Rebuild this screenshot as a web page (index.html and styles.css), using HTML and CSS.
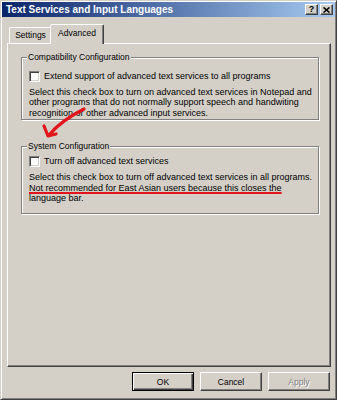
FILE: index.html
```html
<!DOCTYPE html>
<html lang="en">
<head>
    <meta charset="UTF-8">
    <title>Text Services and Input Languages</title>
    <link rel="stylesheet" href="styles.css">
</head>
<body>
    <div class="window">
        <div class="titlebar">
            <span class="title">Text Services and Input Languages</span>
            <div class="caption-buttons">
                <span class="cap-btn help">?</span>
                <span class="cap-btn">
                    <svg width="7" height="6" viewBox="0 0 7 6">
                        <path d="M0.5,0.5 L6.5,5.5 M6.5,0.5 L0.5,5.5" stroke="#000" stroke-width="1.6"/>
                    </svg>
                </span>
            </div>
        </div>

        <div class="client">
            <div class="tabs">
                <div class="tab">Settings</div>
                <div class="tab active">Advanced</div>
            </div>

            <div class="panel">
                <fieldset class="group">
                    <legend>Compatibility Configuration</legend>
                    <div class="check"><span class="box"></span>Extend support of advanced text services to all programs</div>
                    <p class="desc">Select this check box to turn on advanced text services in Notepad and<br>other programs that do not normally support speech and handwiting<br>recognition or other advanced input services.</p>
                </fieldset>

                <fieldset class="group system">
                    <legend>System Configuration</legend>
                    <div class="check"><span class="box"></span>Turn off advanced text services</div>
                    <p class="desc">Select this check box to turn off advanced text services in all programs.<br><span class="marked">Not recommended for East Asian users because this closes the</span><br>language bar.</p>
                </fieldset>
            </div>

            <div class="actions">
                <button type="button" class="btn default">OK</button>
                <button type="button" class="btn">Cancel</button>
                <button type="button" class="btn" disabled>Apply</button>
            </div>
        </div>

        <!-- red arrow drawn over the dialog -->
        <svg class="arrow" width="50" height="36" viewBox="0 0 50 36">
            <path d="M46,4 C38,8 22,17 11,30" fill="none" stroke="#e3141c" stroke-width="3.2" stroke-linecap="round"/>
            <path d="M6,21 L10,31 L18,29" fill="none" stroke="#e3141c" stroke-width="3.2" stroke-linecap="round" stroke-linejoin="round"/>
        </svg>
    </div>
</body>
</html>
```

FILE: styles.css
```css
body {
    margin: 0;
    background: #d4d0c8;
}

.window {
    position: relative;
    width: 337px;
    height: 400px;
    box-sizing: border-box;
    padding: 1px;
    border: 1px solid;
    border-color: #d4d0c8 #404040 #404040 #d4d0c8;
    box-shadow: inset 1px 1px #fff, inset -1px -1px #808080;
    background: #d4d0c8;
    font-family: "Liberation Sans", Arial, sans-serif;
    font-size: 8.5px;
    color: #000;
}

/* barra de titulo */
.titlebar {
    display: flex;
    align-items: center;
    justify-content: space-between;
    height: 15px;
    padding: 0 2px 0 2px;
    background: linear-gradient(to right, #0a246a, #a6caf0);
}

.title {
    color: #fff;
    font-weight: bold;
    font-size: 10px;
    padding-left: 2px;
}

.caption-buttons {
    display: flex;
    gap: 2px;
}

.cap-btn {
    display: flex;
    align-items: center;
    justify-content: center;
    width: 13px;
    height: 11px;
    box-sizing: border-box;
    border: 1px solid;
    border-color: #fff #404040 #404040 #fff;
    box-shadow: inset -1px -1px #808080;
    background: #d4d0c8;
}

.cap-btn.help {
    font-weight: bold;
    font-size: 9px;
    line-height: 9px;
}

.client {
    padding: 7px 4px 0 5px;
}

/* pestañas */
.tabs {
    display: flex;
    align-items: flex-end;
    height: 19px;
    padding-left: 2px;
}

.tab {
    width: 43px;
    height: 16px;
    box-sizing: border-box;
    border: 1px solid;
    border-bottom: none;
    border-color: #fff #404040 transparent #fff;
    border-radius: 2px 2px 0 0;
    box-shadow: inset -1px 0 #808080;
    text-align: center;
    line-height: 14px;
}

.tab.active {
    position: relative;
    z-index: 1;
    width: 54px;
    height: 20px;
    margin-left: -2px;
    margin-bottom: -1px;
    background: #d4d0c8;
    line-height: 16px;
}

.panel {
    height: 324px;
    box-sizing: border-box;
    padding: 0 11px 0 13px;
    border: 1px solid;
    border-color: #fff #404040 #404040 #fff;
    box-shadow: inset -1px -1px #808080;
}

/* cuadros de grupo */
.group {
    margin: 8px 0 0;
    padding: 8px 7px 1px 7px;
    min-width: 0;
    border: 1px solid #808080;
    box-shadow: inset 1px 1px #fff, 1px 1px #fff;
}

.group legend {
    margin-left: -2px;
    padding: 0 1px;
    line-height: 11px;
    background: #d4d0c8;
}

.group.system {
    margin-top: 21px;
    padding-top: 4px;
    padding-bottom: 10px;
}

.check {
    display: flex;
    align-items: center;
    height: 11px;
    line-height: 11px;
    font-size: 9px;
}

.box {
    width: 11px;
    height: 11px;
    box-sizing: border-box;
    margin-right: 4px;
    border: 1px solid;
    border-color: #808080 #fff #fff #808080;
    box-shadow: inset 1px 1px #404040, inset -1px -1px #d4d0c8;
    background: #fff;
}

.desc {
    margin: 5px 0 0;
    font-size: 9px;
    line-height: 10.4px;
    white-space: nowrap;
}

.marked {
    text-decoration: underline;
    text-decoration-color: #e3141c;
    text-decoration-thickness: 2px;
    text-underline-offset: 1px;
}

/* botones */
.actions {
    display: flex;
    justify-content: flex-end;
    gap: 6px;
    margin-top: 5px;
    padding-right: 1px;
}

.btn {
    width: 62px;
    height: 19px;
    box-sizing: border-box;
    padding: 0;
    border: 1px solid;
    border-color: #fff #404040 #404040 #fff;
    box-shadow: inset -1px -1px #808080;
    background: #d4d0c8;
    font-family: inherit;
    font-size: 8.5px;
    color: #000;
}

.btn.default {
    border-color: #000;
    box-shadow: inset 1px 1px #fff, inset -1px -1px #404040, inset -2px -2px #808080;
}

.btn:disabled {
    color: #808080;
    text-shadow: 1px 1px #fff;
}

.arrow {
    position: absolute;
    left: 37px;
    top: 104px;
    pointer-events: none;
}
```
